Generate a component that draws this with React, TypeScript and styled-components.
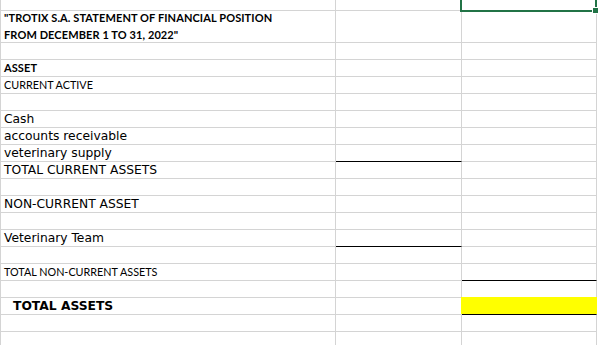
import styled, { createGlobalStyle, css } from "styled-components";

const GlobalStyle = createGlobalStyle`
  html, body {
    margin: 0;
    padding: 0;
    background: #fff;
    overflow: hidden;
  }
`;

type Font = "calibri" | "calibriBold" | "verdana" | "verdanaBold";

type RowData = {
  height?: number;
  label?: string;
  font?: Font;
  indent?: number;
  bLine?: boolean;
  cLine?: boolean;
  cFill?: string;
  selected?: boolean;
};

const rows: RowData[] = [
  { height: 11, selected: true },
  { height: 32 },
  { font: "calibri" },
  { label: "ASSET", font: "calibriBold" },
  { label: "CURRENT ACTIVE", font: "calibri" },
  {},
  { label: "Cash", font: "verdana" },
  { label: "accounts receivable", font: "verdana" },
  { label: "veterinary supply", font: "verdana", bLine: true },
  { label: "TOTAL CURRENT ASSETS", font: "verdana" },
  {},
  { label: "NON-CURRENT ASSET", font: "verdana" },
  {},
  { label: "Veterinary Team", font: "verdana", bLine: true },
  {},
  { label: "TOTAL NON-CURRENT ASSETS", font: "calibri", cLine: true },
  {},
  { label: "TOTAL ASSETS", font: "verdanaBold", indent: 12, cFill: "#ffff00", cLine: true },
  {},
  {},
];

const fonts = {
  calibri: css`
    font-family: "Lato", "Open Sans", sans-serif;
    font-size: 10.8px;
    font-weight: 400;
    padding-bottom: 1px;
  `,
  calibriBold: css`
    font-family: "Lato", "Open Sans", sans-serif;
    font-size: 11px;
    font-weight: 700;
    letter-spacing: 0.1px;
    padding-bottom: 1px;
  `,
  verdana: css`
    font-family: "DejaVu Sans", Verdana, sans-serif;
    font-size: 12.3px;
    font-weight: 400;
    padding-bottom: 1px;
  `,
  verdanaBold: css`
    font-family: "DejaVu Sans", Verdana, sans-serif;
    font-size: 12.3px;
    font-weight: 700;
    padding-bottom: 1px;
  `,
};

export default function App() {
  return (
    <>
      <GlobalStyle />
      <Sheet>
        {rows.map((r, i) => (
          <Row key={i} $height={r.height ?? 17}>
            <CellA $font={r.font ?? "verdana"} $indent={r.indent ?? 3}>
              {i === 1 ? (
                <Title>
                  "TROTIX S.A. STATEMENT OF FINANCIAL POSITION
                  <br />
                  FROM DECEMBER 1 TO 31, 2022"
                </Title>
              ) : (
                r.label
              )}
            </CellA>
            <CellB $line={r.bLine} />
            <CellC $line={r.cLine} $fill={r.cFill}>
              {r.selected && (
                <Selection>
                  <Handle />
                </Selection>
              )}
            </CellC>
          </Row>
        ))}
      </Sheet>
    </>
  );
}

const Sheet = styled.div`
  display: flex;
  flex-direction: column;
  width: 598px;
  height: 345px;
  overflow: hidden;
  border-left: 1px solid #d4d4d4;
  box-sizing: border-box;
  color: #000;
`;

const Row = styled.div<{ $height: number }>`
  display: flex;
  flex: none;
  height: ${(p) => p.$height}px;
`;

const Cell = styled.div<{ $line?: boolean; $fill?: string }>`
  position: relative;
  box-sizing: border-box;
  height: 100%;
  border-right: 1px solid #d4d4d4;
  border-bottom: 1px solid ${(p) => (p.$line ? "#000" : "#d4d4d4")};
  background: ${(p) => p.$fill ?? "transparent"};

  ${(p) =>
    p.$fill &&
    css`
      &::before {
        content: "";
        position: absolute;
        left: -1px;
        right: -1px;
        top: -1px;
        bottom: 0;
        background: ${p.$fill};
      }
    `}
`;

const CellA = styled(Cell)<{ $font: Font; $indent: number }>`
  width: 335px;
  display: flex;
  align-items: flex-end;
  padding-left: ${(p) => p.$indent}px;
  white-space: nowrap;
  line-height: 14px;
  ${(p) => fonts[p.$font]}
`;

const CellB = styled(Cell)`
  width: 126px;
`;

const CellC = styled(Cell)`
  width: 135px;
`;

const Title = styled.div`
  font-family: "Lato", "Open Sans", sans-serif;
  font-size: 11px;
  font-weight: 700;
  letter-spacing: 0.1px;
  line-height: 16.5px;
  margin-bottom: -2px;
`;

const Selection = styled.div`
  position: absolute;
  left: -2px;
  right: -1px;
  top: -4px;
  bottom: -2px;
  border: 2px solid #217346;
  z-index: 2;
`;

const Handle = styled.div`
  position: absolute;
  right: -4px;
  bottom: -4px;
  width: 5px;
  height: 5px;
  background: #217346;
  border: 1px solid #fff;
`;
